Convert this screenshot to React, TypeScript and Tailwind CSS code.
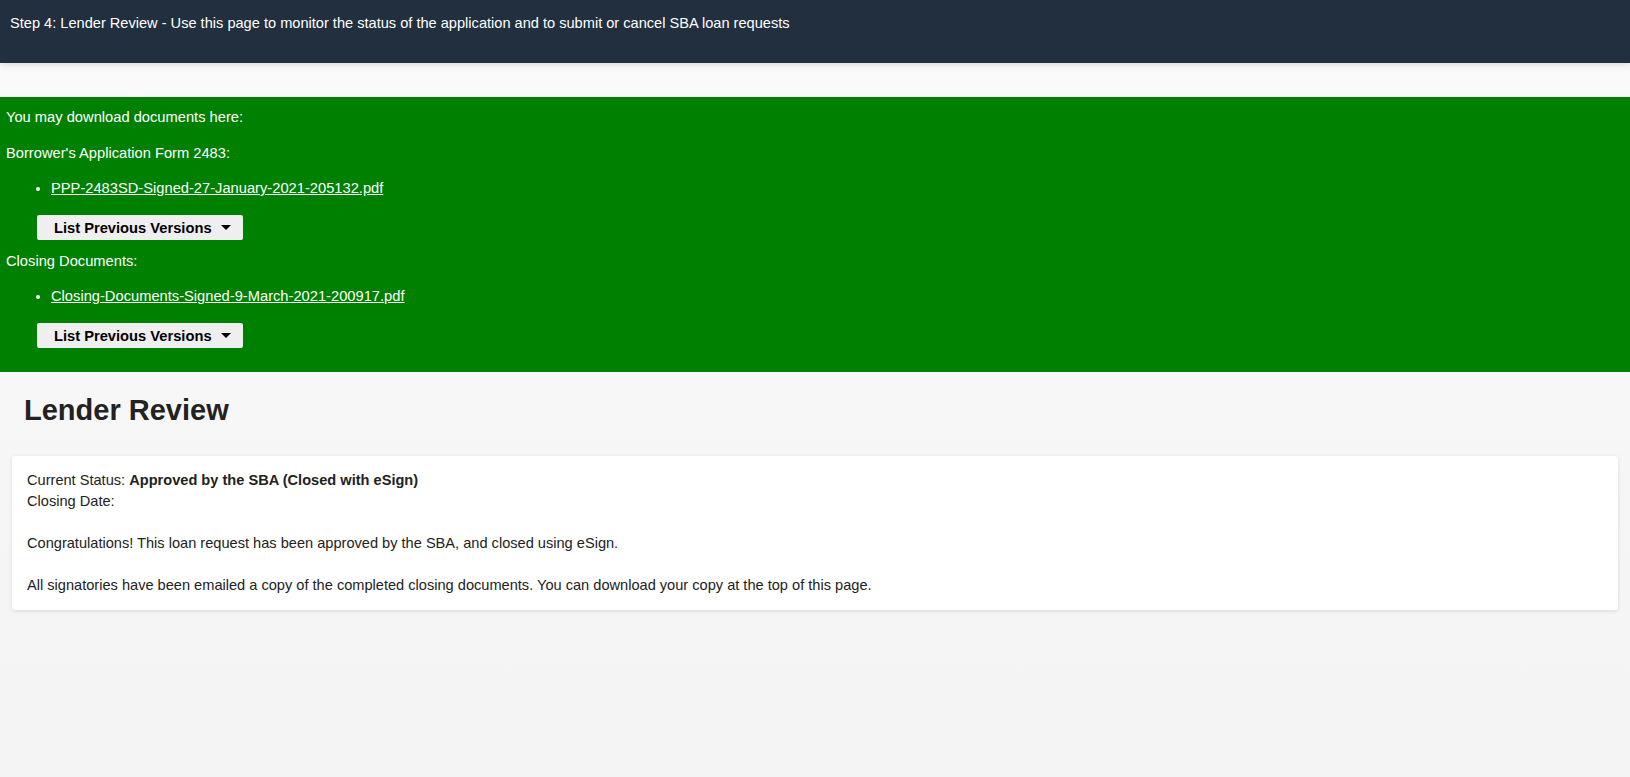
const docs = [
  { label: "Borrower's Application Form 2483:", file: "PPP-2483SD-Signed-27-January-2021-205132.pdf" },
  { label: "Closing Documents:", file: "Closing-Documents-Signed-9-March-2021-200917.pdf" },
];

function VersionsButton() {
  return (
    <button className="ml-[31px] mt-[17px] flex h-[25px] w-[206px] items-center rounded-[2px] bg-[#efefef] pl-[17px] text-[14.7px] font-bold text-black">
      List Previous Versions
      <span className="ml-[9px] h-0 w-0 border-x-[5px] border-t-[5px] border-x-transparent border-t-black" />
    </button>
  );
}

export default function App() {
  return (
    <div
      className="min-h-[777px] bg-gradient-to-b from-[#fafafa] to-[#f4f4f4] text-[14.6px] text-[#222]"
      style={{ fontFamily: '"Liberation Sans", Arial, sans-serif' }}
    >
      <header className="relative z-10 flex h-[63px] items-start bg-[#222f3f] px-[10px] pt-[13px] shadow-[0_2px_6px_rgba(0,0,0,0.12)]">
        <p className="text-[14.6px] leading-5 text-white">
          Step 4: Lender Review - Use this page to monitor the status of the application and to submit or cancel SBA
          loan requests
        </p>
      </header>

      <div className="h-[34px]" />

      <section className="bg-[#008000] px-[6px] pb-[24px] pt-[10px] text-[14.7px] leading-5 text-white">
        <p>You may download documents here:</p>
        {docs.map((d, i) => (
          <div key={d.file} className={i === 0 ? "mt-[16px]" : "mt-[11px]"}>
            <p>{d.label}</p>
            <ul className="mt-[15px] list-disc pl-[45px]">
              <li>
                <a href="#" className="underline">
                  {d.file}
                </a>
              </li>
            </ul>
            <VersionsButton />
          </div>
        ))}
      </section>

      <main className="px-[12px] pb-10">
        <h1 className="pl-[12px] pt-[21px] text-[29px] font-bold leading-[34px] text-[#222]">Lender Review</h1>
        <div className="mt-[29px] rounded-[3px] bg-white px-[15px] py-[14px] leading-[21px] shadow-[0_1px_4px_rgba(0,0,0,0.12)]">
          <div>
            Current Status: <b>Approved by the SBA (Closed with eSign)</b>
          </div>
          <div>Closing Date:</div>
          <br />
          <div>Congratulations! This loan request has been approved by the SBA, and closed using eSign.</div>
          <br />
          <div>
            All signatories have been emailed a copy of the completed closing documents. You can download your copy at
            the top of this page.
          </div>
        </div>
      </main>
    </div>
  );
}
